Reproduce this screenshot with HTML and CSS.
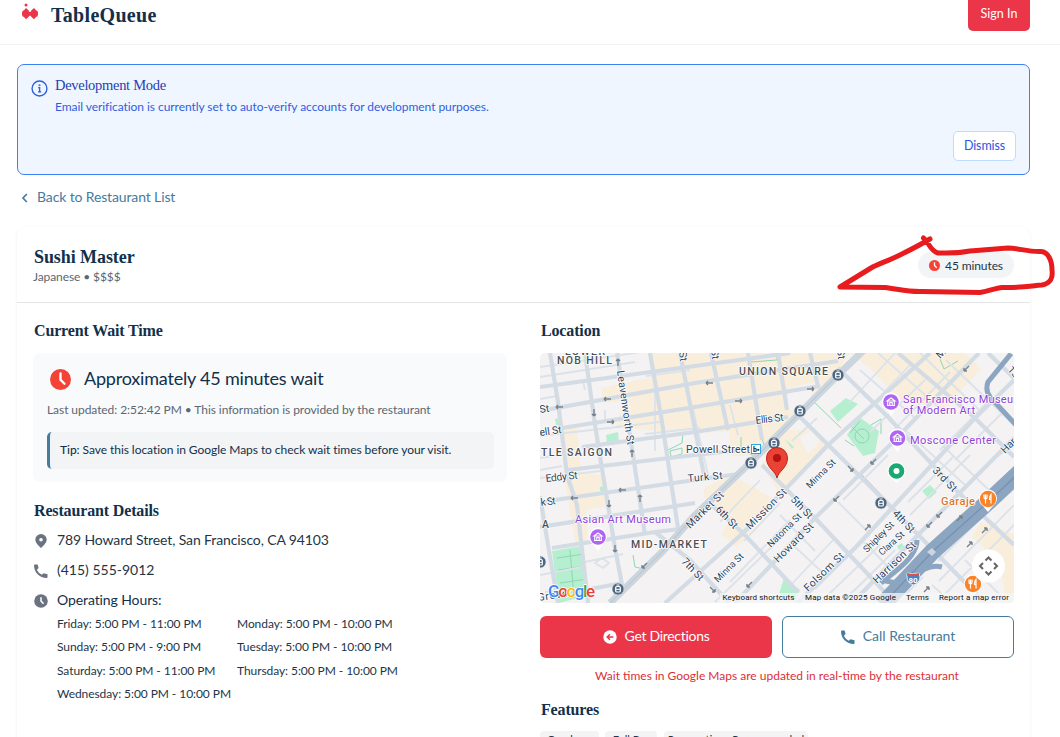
FILE: index.html
```html
<!DOCTYPE html>
<html lang="en">
<head>
<meta charset="utf-8">
<title>TableQueue</title>
<link rel="stylesheet" href="styles.css">
</head>
<body>
<header class="header">
  <a class="brand">
    <svg class="brand-icon" viewBox="0 0 18 18"><g fill="#eb3549"><circle cx="5" cy="2" r="1.500"/><path d="M5 5 7.500 7.300 8.500 9h1l1-1.700L13 5l2 2.300 1.500.7.500 2v1.500l-.5 1.800-1.500.7-2 2.300-2.500-2.300-1-1.300h-1l-1 1.300L5 16.300 3 14l-1.500-.7L1 11.500V10l.5-2L3 7.300z"/></g></svg>
    <span class="brand-name">TableQueue</span>
  </a>
  <button class="signin"><span>Sign In</span></button>
</header>
<main class="main">
  <section class="notice">
    <svg class="notice-icon" viewBox="0 0 16 16" fill="none" stroke="#2f5fe0" stroke-width="1.300"><circle cx="8" cy="8" r="7"/><path d="M6.800 7.200h1.300v4M6.600 11.200h3"/><circle cx="8" cy="4.900" r=".35"/></svg>
    <div class="notice-body">
      <h3 class="notice-title">Development Mode</h3>
      <p class="notice-text">Email verification is currently set to auto-verify accounts for development purposes.</p>
      <button class="dismiss">Dismiss</button>
    </div>
  </section>
  <a class="back"><svg class="back-icon" viewBox="0 0 8 10" fill="none" stroke="#457b9d" stroke-width="1.700"><path d="M5.800 1 2 5l3.800 4"/></svg><span>Back to Restaurant List</span></a>
  <article class="card">
    <div class="card-head">
      <div>
        <h1 class="name">Sushi Master</h1>
        <p class="cuisine">Japanese • $$$$</p>
      </div>
      <span class="pill"><svg class="pill-icon" viewBox="0 0 20 20"><circle cx="10" cy="10" r="10" fill="#f44336"/><path d="M10 4v6l4 4" fill="none" stroke="#fff" stroke-width="2.400"/></svg><span>45 minutes</span></span>
    </div>
    <div class="columns">
      <div class="col">
        <h2 class="heading">Current Wait Time</h2>
        <div class="wait">
          <div class="wait-main"><svg class="wait-icon" viewBox="0 0 20 20"><circle cx="10" cy="10" r="10" fill="#f44336"/><path d="M10 4.200v6l3.800 3.800" fill="none" stroke="#fff" stroke-width="2.200" stroke-linecap="round"/></svg><span>Approximately 45 minutes wait</span></div>
          <p class="updated">Last updated: 2:52:42 PM • This information is provided by the restaurant</p>
          <p class="tip"><b>Tip:</b> Save this location in Google Maps to check wait times before your visit.</p>
        </div>
        <h2 class="heading details-heading">Restaurant Details</h2>
        <div class="detail"><svg class="detail-icon" viewBox="0 0 14 14"><path fill="#6b7280" fill-rule="evenodd" d="M7 0a5.700 5.700 0 0 1 5.700 5.800C12.700 9.500 7 14 7 14S1.300 9.500 1.300 5.800A5.700 5.700 0 0 1 7 0zm0 4a1.800 1.800 0 1 0 0 3.600A1.800 1.800 0 0 0 7 4z"/></svg><span class="address">789 Howard Street, San Francisco, CA 94103</span></div>
        <div class="detail"><svg class="detail-icon" viewBox="0 0 14 14"><path fill="#6b7280" d="M.8.500h2.800l1 3.600-1.700 1.700c1 2.200 2.700 3.900 4.900 4.900l1.700-1.400 4 1v2.900c0 .5-.3.800-.8.800C5.500 14 0 8.500 0 1.300 0 .8.300.500.8.500z"/></svg><span class="phone">(415) 555-9012</span></div>
        <div class="detail"><svg class="detail-icon" viewBox="0 0 20 20"><circle cx="10" cy="10" r="9.700" fill="#6b7280"/><path d="M10 4.500V10l3.600 4" fill="none" stroke="#fff" stroke-width="2.200"/></svg><span class="hours-label">Operating Hours:</span></div>
        <div class="hours">
          <span>Friday: 5:00 PM - 11:00 PM</span><span>Monday: 5:00 PM - 10:00 PM</span>
          <span>Sunday: 5:00 PM - 9:00 PM</span><span>Tuesday: 5:00 PM - 10:00 PM</span>
          <span>Saturday: 5:00 PM - 11:00 PM</span><span>Thursday: 5:00 PM - 10:00 PM</span>
          <span>Wednesday: 5:00 PM - 10:00 PM</span>
        </div>
      </div>
      <div class="col">
        <h2 class="heading">Location</h2>
        <svg class="map" viewBox="540 353 474 250">
          <rect x="540" y="353" width="474" height="250" fill="#f4f2f3"/>
          <g fill="#f8eedb">
            <path d="M647 353H965l16 16-36 39-45-8-30-32-20-15-14 20-38 40-24 30-8 12-48 2-12-28-48 2-42-4 3-12 12-4-2-10-26 2-2-15 56-12z"/>
            <path d="M561 430l16-3 4 45 25 4 2 30-22 4 2 32-12 4-12-70z"/>
            <path d="M762 465 785 430l30 0 12 18-46 48zM705 487l28-12 42 25-38 48-16-14 8-12-26-26z"/>
            <path d="M980 522l34 12v69h-8l-6-40-28-26z"/>
          </g>
          <g fill="#f4f2f3"><path d="M788 388l34-7-20 28-14 2zM695 434l34-3 2 35-36 5zM800 438l12-8 8 12-12 12z"/></g>
          <g fill="#b5efd0">
            <path d="M552 551l30-5 4 50-27 7zM606 435l12-3 1 11-12 1zM555 419l6-1 2 8-7-1zM600 487l5-1v5h-5zM830 411l16-13 12 6-20 18zM847 435l12-18 20 14-4 22-12 3zM784 578l16 12-5 11-16-7zM922 491l8-6 7 7-8 7zM897 546l5-3 2 4-5 3zM785 439l9 8-2 2z"/>
          </g>
          <g fill="none" stroke="#8ed6b1" stroke-width="1"><path d="M749 353l2 9 26-2v-7M668 450l14-7 1-10M670 451l1 6 11-3v-6zM813 401l28 27M741 437v12l13 7 12-9M862 475l26 27M633 555l2 12 9 2M940 359l4 10 14-8M871 425l10-6v15M557 558l27-4M558 570l27-4M560 583l27-4M570 550l4 48M850 425l14 14M850 433l10-12M845 440l9 6M756 419l5 16 3 10"/><circle cx="862" cy="436" r="7"/></g>
          <g fill="none" stroke="#dce2e9" stroke-width="1.800">
            <path d="M540 367l108-16M540 436l120-14M540 377l95-15M540 399l17-3M540 458l25-4M646 376l44-6M540 470l22-4M645 434l55-6M655 371v80M692 405l16 70M540 478l60-7M583 381l2 9M605 410v13M817 418l-25 23M730 405l8 30M760 480l-40 42M780 503l-36 38M790 520l-60 62M800 535l-62 63M833 540l-42 45M780 515l35 36M822 572l-28-26M850 485l60-60M838 502l32 32M870 534l-55 55M880 545l-52 50M855 590l40-40M540 575l42-8M545 592l30-4M585 562l38-8M595 563l7-5 7 5-6 5zM715 602l80-78M888 455l-45 45M895 353l-46 50M910 365l-43 45M925 380l-55 52M950 372l-58 60M990 400l-50 50M1005 410l-50 50M1000 455l28-28M908 502l45-45M910 515l60-60M870 575l-28 27M905 430l60 55M860 370l55 48M878 353l64 57M920 353l60 58M946 360l68 65M943 446l50 48M1014 485l-76 76M1014 505l-75 76M1014 525l-76 76M965 560l40 40M932 585l20 18M905 595l18-18M862 540l34 35"/>
          </g>
          <g fill="none" stroke="#d3dce5" stroke-width="4.200">
            <path d="M540 387 695 366 790 353M540 411 695 383 838 361M562 428 695 407 820 386M582 447 695 432 788 417M568 470 695 455 750 449M540 502 695 480 738 474M540 527 695 503M552 548 655 532 680 529M585 590 622 583"/>
            <path d="M550 353 558 402 567 475 577 505 588 603M585 353 595 425 603 475 615 548 623 590M617 353 633 455 645 535M650 353 662 422 678 528M680 353 704 475M711 353 728 430M748 353 762 440M778 353 787 410M810 353 818 386M540 496 548 545 558 603"/>
            <path d="M655 532 690 560 729 603M708 502 743 533 798 592M762 465 815 518 895 603M800 417 892 508 985 603M838 368 888 417 958 492 1014 545M898 353 975 418 1014 457M988 353 1014 378"/>
            <path d="M665 603 743 533 828 445 895 385 930 353M735 603 773 563 815 518 888 447 979 353M797 603 855 548 892 508 975 418 1014 380M860 595 918 535 1014 438"/>
          </g>
          <path d="M610 603 662 552 695 515 750 463 838 375 864 350" fill="none" stroke="#cbd5de" stroke-width="7"/>
          <path d="M610 603 662 552 695 515 750 463 838 375" fill="none" stroke="#b7c2cf" stroke-width="1"/>
          <g fill="none" stroke="#8ca5c1"><path d="M1014 350 988 382q-3 8 2 15l26 28" stroke-width="5"/><path d="M1020 472 988 502 932 552 882 605" stroke-width="17"/><path d="M917 540q0 14-20 30l-16 13M942 567q-14-4-30 11l-24 25M880 580l28 5" stroke-width="5"/></g>
          <path d="M1020 472 988 502 932 552 882 605" fill="none" stroke="#7894b3" stroke-width="1.500"/>
          <path d="M927 552l5-4 4 4-4 4z" fill="#cbd5df"/>
          <g fill="none" stroke="#78828b" stroke-width="1.400">
            <path d="M556 407h7m-7 0 2-2m-2 2 2 2M604 399h7m-7 0 2-2m-2 2 2 2M607 422h7m0 0-2-2m2 2-2 2M618 366v-7m0 0-2 2m2-2 2 2M594 409v7m0 0-2-2m2 2 2-2M632 457v-7m0 0-2 2m2-2 2 2M706 383h7m-7 0 2-2m-2 2 2 2M735 401h7m0 0-2-2m2 2-2 2M807 389h7m0 0-2-2m2 2-2 2M571 498h7m-7 0 2-2m-2 2 2 2M619 490h7m-7 0 2-2m-2 2 2 2M609 500v7m0 0-2-2m2 2 2-2M615 545v7m0 0-2-2m2 2 2-2M640 502v-7m0 0-2 2m2-2 2 2M642 568l5-5m-5 5h3m-3 0v-3M747 587l5-5m-5 5h3m-3 0v-3M834 501l5-5m-5 5h3m-3 0v-3M710 587l5 5m0 0h-3m3 0v-3M964 371l5-5m-5 5h3m-3 0v-3M871 464l5-5m-5 5h3m-3 0v-3M865 530l5-5m0 0h-3m3 0v3M927 527l5-5m-5 5h3m-3 0v-3M937 517l5-5m-5 5h3m-3 0v-3M957 521l5-5m0 0h-3m3 0v3M982 533l5-5m0 0h-3m3 0v3M967 547l5-5m0 0h-3m3 0v3M924 592l5-5m0 0h-3m3 0v3M848 466l5 5m0 0h-3m3 0v-3"/>
          </g>
          <g class="streets">
            <text x="617" y="371" transform="rotate(82 617 371)" textLength="75">Leavenworth St</text>
            <text x="540" y="413" transform="rotate(-8 540 413)">St</text>
            <text x="540" y="436" transform="rotate(-8 540 436)" textLength="22">ell St</text>
            <text x="546" y="482" transform="rotate(-6 546 482)" textLength="32">Eddy St</text>
            <text x="541" y="506" transform="rotate(-7 541 506)" textLength="15">k St</text>
            <text x="538" y="601" transform="rotate(-8 538 601)" textLength="30">Grove</text>
            <text x="679" y="352" transform="rotate(82 679 352)">St</text>
            <text x="711" y="350" transform="rotate(82 711 350)">St</text>
            <text x="837" y="350" transform="rotate(82 837 350)">St</text>
            <text x="756" y="424" transform="rotate(-7 756 424)" textLength="28">Ellis St</text>
            <text x="688" y="482" transform="rotate(-5 688 482)" textLength="35">Turk St</text>
            <text x="686" y="453" textLength="64">Powell Street</text>
            <text x="690" y="529" transform="rotate(-44 690 529)" textLength="48">Market St</text>
            <text x="715" y="510" transform="rotate(46 715 510)" textLength="27">6th St</text>
            <text x="681" y="562" transform="rotate(46 681 562)" textLength="27">7th St</text>
            <text x="750" y="530" transform="rotate(-45 750 530)" textLength="53">Mission St</text>
            <text x="790" y="500" transform="rotate(46 790 500)" textLength="27">5th St</text>
            <text x="810" y="489" transform="rotate(-45 810 489)" class="small" textLength="37">Minna St</text>
            <text x="718" y="583" transform="rotate(-45 718 583)" class="small" textLength="37">Minna St</text>
            <text x="771" y="548" transform="rotate(-45 771 548)" class="small" textLength="44">Natoma St</text>
            <text x="778" y="563" transform="rotate(-45 778 563)" textLength="51">Howard St</text>
            <text x="808" y="592" transform="rotate(-44 808 592)" textLength="51">Folsom St</text>
            <text x="892" y="514" transform="rotate(46 892 514)" textLength="27">4th St</text>
            <text x="932" y="471" transform="rotate(46 932 471)" textLength="30">3rd St</text>
            <text x="867" y="553" transform="rotate(-45 867 553)" class="small" textLength="39">Shipley St</text>
            <text x="882" y="556" transform="rotate(-42 882 556)" class="small" textLength="31">Clara St</text>
            <text x="877" y="584" transform="rotate(-44 877 584)" textLength="55">Harrison St</text>
            <text x="940" y="359" transform="rotate(-45 940 359)">Mi</text>
            <text x="1007" y="370" transform="rotate(47 1007 370)">1st</text>
            <text x="1005" y="454" transform="rotate(-45 1005 454)">Har</text>
          </g>
          <g class="areas"><text x="565" y="354.500" textLength="40">LOWER</text><text x="557" y="364" textLength="55">NOB HILL</text><text x="739" y="375" textLength="89">UNION SQUARE</text><text x="541" y="456" textLength="71">TLE SAIGON</text><text x="631" y="548" textLength="76">MID-MARKET</text><text x="542" y="528">A</text></g>
          <g class="places"><text x="903" y="403" textLength="120">San Francisco Museum</text><text x="903" y="414" textLength="72">of Modern Art</text><text x="910" y="444" textLength="86">Moscone Center</text><text x="575" y="523" textLength="96">Asian Art Museum</text></g>
          <text x="941" y="505" class="food" textLength="34">Garaje</text>
          <defs>
            <g id="tram"><circle r="6" fill="#4d6780" stroke="#e5e9ed" stroke-width=".6"/><rect x="-2.300" y="-2.500" width="4.600" height="5.500" rx="1" fill="none" stroke="#fff" stroke-width="1.200"/><path d="M-2.300.300h4.600M-1.500-4h3" stroke="#fff"/></g>
            <g id="museum"><path d="M0 14-5 7a9 9 0 1 1 10 0z" fill="#fff"/><circle r="7.800" fill="#b065f2"/><path d="M-4-1 0-4l4 3zM-3.300-1v4M3.300-1v4M-4 3.500h8M-1.200 3V.500h2.400V3" fill="none" stroke="#fff" stroke-width="1.100"/></g>
            <g id="fork"><path d="M0 13-5 7a9 9 0 1 1 10 0z" fill="#fff"/><circle r="8.200" fill="#fa8326"/><path d="M-4-4.500v3q0 1.500 1.500 1.500T-1-1.500v-3M-2.500-4.500v9M3 4.500v-9q-2 2-1.500 5H3" fill="none" stroke="#fff" stroke-width="1.200"/></g>
          </defs>
          <use href="#tram" x="838" y="375"/><use href="#tram" x="800" y="411"/><use href="#tram" x="774" y="443"/><use href="#tram" x="751" y="463"/><use href="#tram" x="881" y="503"/><use href="#tram" x="618" y="589"/><use href="#tram" x="540" y="562"/>
          <rect x="751.500" y="444.500" width="9" height="9" fill="#fff" stroke="#29a9df"/><text x="753" y="452" class="bart">b▪</text>
          <use href="#museum" x="891" y="402"/><use href="#museum" x="897.500" y="438"/><use href="#museum" x="598" y="537"/>
          <use href="#fork" x="988" y="499"/><use href="#fork" x="973" y="584"/>
          <path d="M896.500 483l-6-6h12z" fill="#fff"/><circle cx="896.500" cy="471" r="8.500" fill="#19a974" stroke="#fff" stroke-width="1.300"/><circle cx="896.500" cy="471" r="3" fill="#fff"/>
          <path d="M777 478c-1.500-7-10.500-10-10.500-20a10.500 10.500 0 0 1 21 0c0 10-9 13-10.500 20z" fill="#ea4335" stroke="#c5221f"/><circle cx="777" cy="458" r="4" fill="#b31412"/>
          <path d="M907 573q6 2 12 0l1 4q0 6-6.500 8-6.500-2-6.500-8z" fill="#4b82c5" stroke="#fff" stroke-width=".8"/><path d="M907 573q6 2 12 0v2.500h-12z" fill="#d9534f"/><text x="908.500" y="583" class="shield">80</text>
          <circle cx="988.500" cy="566" r="16.500" fill="#fff"/><path d="M985.500 560.500l3-3 3 3M985.500 571.500l3 3 3-3M983 563l-3 3 3 3M994 563l3 3-3 3" fill="none" stroke="#666" stroke-width="2"/>
          <path d="M720 593h294v10H720z" fill="#f5f5f5" fill-opacity=".75"/>
          <g class="legal"><text x="722.500" y="600" textLength="72">Keyboard shortcuts</text><text x="805" y="600" textLength="91">Map data ©2025 Google</text><text x="906" y="600" textLength="23">Terms</text><text x="939" y="600" textLength="70">Report a map error</text></g>
          <text x="548" y="597" class="google" textLength="47"><tspan fill="#4285f4">G</tspan><tspan fill="#ea4335">o</tspan><tspan fill="#fbbc05">o</tspan><tspan fill="#4285f4">g</tspan><tspan fill="#34a853">l</tspan><tspan fill="#ea4335">e</tspan></text>
        </svg>
        <div class="actions">
          <button class="btn btn-primary"><svg class="btn-icon" viewBox="0 0 14 14"><circle cx="7" cy="7" r="6.700" fill="#fff"/><path d="M10.300 7H4.500M7 4.300 4.200 7 7 9.700" fill="none" stroke="#eb3549" stroke-width="1.500"/></svg><span>Get Directions</span></button>
          <button class="btn btn-outline"><svg class="btn-icon" viewBox="0 0 14 14"><path fill="#457b9d" d="M.8.500h2.800l1 3.600-1.700 1.700c1 2.200 2.700 3.900 4.900 4.900l1.700-1.400 4 1v2.900c0 .5-.3.800-.8.800C5.500 14 0 8.500 0 1.300 0 .8.300.500.8.500z"/></svg><span>Call Restaurant</span></button>
        </div>
        <p class="realtime">Wait times in Google Maps are updated in real-time by the restaurant</p>
        <h2 class="heading features-heading">Features</h2>
        <div class="tags"><span class="tag tag-cuisine">Omakase</span><span class="tag tag-bar">Full Bar</span><span class="tag tag-reserve">Reservations Recommended</span></div>
      </div>
    </div>
  </article>
</main>
<svg class="annotation" viewBox="0 0 1060 737"><path d="M930 239C920 245 908 251 900 255C888 261 878 264 871 268L840 287L885 287.500C898 289 908 292 922 291.500L980 292.500C990 291 995 288 1002 287.500C1020 288 1030 286 1042 285C1051 283 1053 278 1052 270C1052 260 1048 252 1041 251.500C1028 252 1018 248 1008 248L970 251C955 254 945 253 938 253C930 251 929 242 923.500 238" fill="none" stroke="#e81c1e" stroke-width="5" stroke-linecap="round" stroke-linejoin="round"/></svg>
</body>
</html>
```
FILE: styles.css
```css
* { box-sizing: border-box; }
html, body { height: 737px; overflow: hidden; }
body { margin: 0; background: #fff; color: #1d3547; font-family: Lato, sans-serif; font-size: 14px; position: relative; }
h1, h2, h3, p { margin: 0; }
button { font-family: inherit; padding: 0; }
svg { display: block; flex: none; }
span, p, h1, h2, h3 { white-space: nowrap; }

.header { height: 45px; border-bottom: 1px solid #f1f2f3; display: flex; justify-content: space-between; padding: 0 30px 0 21px; }
.brand { display: flex; gap: 12px; }
.brand-icon { width: 18px; height: 18px; margin-top: 3px; }
.brand-name { font: bold 20px/30px "Liberation Serif", serif; letter-spacing: .3px; color: #12304a; }
.signin { width: 62px; height: 31px; border: 0; border-radius: 0 0 5px 5px; background: #eb3549; color: #fff; font-size: 12.500px; line-height: 26px; padding-bottom: 3px; }

.main { padding: 19px 30px 0 17px; }
.notice { height: 111px; border: 1px solid #3b82f6; border-radius: 7px; background: #eff6ff; display: flex; padding: 11px 13px 0; gap: 7px; }
.notice-icon { width: 17px; height: 17px; margin-top: 4px; }
.notice-body { flex: 1; display: flex; flex-direction: column; }
.notice-title { font: 500 14.500px/18px "Liberation Serif", serif; letter-spacing: -.3px; color: #2740b0; }
.notice-text { font-size: 12px; line-height: 18px; letter-spacing: -.06px; margin-top: 4px; color: #2f5fe0; }
.dismiss { align-self: flex-end; width: 63px; height: 30px; margin-top: 15px; padding-bottom: 2px; border: 1px solid #bfdbfe; border-radius: 5px; background: #fff; color: #2f55dd; font-size: 12.500px; letter-spacing: -.1px; }
.back { display: flex; align-items: center; height: 20px; margin: 11px 0 0 4px; gap: 8px; letter-spacing: -.13px; color: #457b9d; }
.back-icon { width: 8px; height: 10px; margin-top: 3px; }

.card { margin-top: 21px; height: 520px; border-radius: 10px; box-shadow: 0 1px 4px rgba(0,0,0,.06); }
.card-head { height: 76px; border-bottom: 1px solid #e3e5e7; padding: 18px 16px 0; display: flex; justify-content: space-between; }
.name { font: bold 18px/24px "Liberation Serif", serif; letter-spacing: -.08px; padding-left: 1px; color: #12304a; }
.cuisine { font-size: 12px; line-height: 15px; letter-spacing: -.1px; color: #5b6773; }
.pill { display: flex; align-items: center; justify-content: center; width: 96px; height: 26px; gap: 5px; margin-top: 7px; border-radius: 13px; background: #f2f4f5; font-size: 12px; letter-spacing: -.1px; }
.pill-icon { width: 11px; height: 11px; }
.columns { display: grid; grid-template-columns: 474px 474px; gap: 33px; padding: 17px 16px 0; }
.heading { font: bold 16px/22px "Liberation Serif", serif; letter-spacing: -.15px; padding-left: 1px; color: #12304a; }
.wait { height: 129px; margin-top: 11px; border-radius: 7px; background: #f8fafc; padding: 15px 13px 0 14px; }
.wait-main { display: flex; align-items: center; gap: 13px; height: 22px; padding-left: 3px; font-size: 18px; line-height: 20px; letter-spacing: -.2px; color: #12304a; }
.wait-main span { padding-bottom: 2px; }
.wait-icon { width: 21px; height: 21px; }
.updated { margin-top: 12px; font-size: 12px; line-height: 16px; letter-spacing: -.065px; color: #5b6773; }
.tip { margin-top: 14px; height: 37px; border-left: 3px solid #457b9d; border-radius: 5px; background: #f2f4f5; padding-left: 10px; font-size: 12px; line-height: 36px; letter-spacing: -.055px; color: #12304a; }
.tip b { font-weight: 500; }
.details-heading { margin: 18px 0 9px; }
.detail { height: 20px; margin-bottom: 10px; display: flex; align-items: center; gap: 9px; padding-left: 1px; }
.detail span { padding-bottom: 3px; }
.detail-icon { width: 14px; height: 14px; }
.address { letter-spacing: -.12px; }
.hours-label { letter-spacing: -.1px; color: #12304a; }
.hours { display: grid; grid-template-columns: 174px auto; justify-content: start; column-gap: 6px; grid-auto-rows: 23.300px; margin: -9px 0 0 24px; font-size: 12px; line-height: 23px; letter-spacing: -.07px; }
.map { width: 474px; height: 250px; margin-top: 11px; border-radius: 5px; }
.actions { display: grid; grid-template-columns: 1fr 1fr; gap: 10px; margin-top: 13px; }
.btn { display: flex; align-items: center; justify-content: center; gap: 8px; height: 42px; border: 0; border-radius: 6px; font-size: 14px; padding-bottom: 3px; }
.btn-icon { width: 14px; height: 14px; margin-top: 3px; }
.btn-primary { background: #eb3549; color: #fff; letter-spacing: -.3px; }
.btn-outline { border: 1px solid #457b9d; background: #fff; color: #457b9d; }
.realtime { margin-top: 9px; text-align: center; font-size: 12px; line-height: 18px; color: #dc2f38; }
.features-heading { margin-top: 14px; }
.tags { display: flex; gap: 6px; margin-top: 10px; }
.tag { height: 22px; border-radius: 4px; background: #f2f4f5; font-size: 11px; line-height: 18px; text-align: center; }
.tag-cuisine { width: 59px; }
.tag-bar { width: 52px; margin-right: 1px; }
.tag-reserve { width: 144px; }

.map text { paint-order: stroke; stroke: #fff; stroke-width: 1.500px; stroke-linejoin: round; }
.streets text { font: 400 10.500px Roboto, sans-serif; fill: #2c455f; }
.streets .small { font-size: 9.500px; }
.areas text { font: 500 10.500px Roboto, sans-serif; fill: #4b4f55; }
.places text { font: 400 11px Roboto, sans-serif; fill: #8f40d8; }
.map .food { font: 500 11px Roboto, sans-serif; fill: #df7628; }
.map .bart { font: bold 7px Roboto, sans-serif; fill: #111; stroke: none; }
.map .shield { font: bold 8px Roboto, sans-serif; fill: #fff; stroke: none; }
.legal text { font: 8px Roboto, sans-serif; fill: #111; stroke: none; }
.map .google { font: 500 17px Roboto, sans-serif; }
.annotation { position: absolute; left: 0; top: 0; width: 1060px; height: 737px; pointer-events: none; }
```
